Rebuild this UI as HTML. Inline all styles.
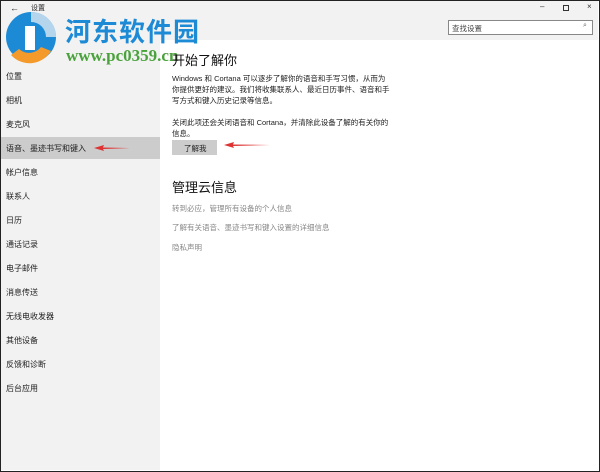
<!DOCTYPE html>
<html><head><meta charset="utf-8"><style>
*{margin:0;padding:0;box-sizing:border-box}
body{width:600px;height:472px;overflow:hidden;font-family:"Liberation Sans","Noto Sans CJK SC",sans-serif;background:#fff;position:relative}
.win{position:absolute;left:0;top:0;width:600px;height:472px;border:1px solid #222;}
.top{position:absolute;left:0;top:0;width:598px;height:40px;background:#f2f2f2}
.side{position:absolute;left:0;top:40px;width:160px;height:430px;background:#f2f2f2}
.t{position:absolute;font-size:8px;color:#222;white-space:nowrap}
.s{position:absolute;left:6px;font-size:8px;color:#222}
.sel{position:absolute;left:0;top:137px;width:160px;height:22px;background:#ccc}
.p{position:absolute;left:172px;font-size:7.5px;line-height:11px;color:#222;width:220px}
.h{position:absolute;left:172px;font-size:13px;color:#111}
.a{position:absolute;left:172px;font-size:7.5px;color:#888}
</style></head><body>
<div class="top"></div>
<div class="side"></div>
<div class="sel"></div>
<div class="win"></div>
<div class="t" style="left:10px;top:3px;font-size:9px">←</div>
<div class="t" style="left:31px;top:3px;font-size:7px">设置</div>
<div class="t" style="left:540px;top:2px;font-size:8px;color:#333">–</div>
<div style="position:absolute;left:563px;top:5px;width:6px;height:6px;border:1px solid #333"></div>
<div class="t" style="left:587px;top:2px;font-size:8px;color:#333">×</div>
<div style="position:absolute;left:448px;top:20px;width:145px;height:15px;border:1px solid #888;background:#fff"></div>
<div class="t" style="left:452px;top:23px;font-size:7.5px;color:#444">查找设置</div>
<div class="t" style="left:583px;top:22px;font-size:7px;color:#666">⌕</div>
<svg style="position:absolute;left:3px;top:10px" width="60" height="55"><circle cx="28" cy="27" r="25" fill="#1d8ad6"/><path d="M28 2a25 25 0 0 1 25 25h-10a15 15 0 0 0-15-15z" fill="#f5f5f5" opacity=".7"/><path d="M8 45a25 25 0 0 0 40-4l-10-4a15 15 0 0 1-22 2z" fill="#f39a2a"/><rect x="22" y="16" width="10" height="24" fill="#fff"/></svg>
<div class="t" style="left:65px;top:12px;font-size:26px;font-weight:bold;color:#1d8ad6;letter-spacing:1px">河东软件园</div>
<div class="t" style="left:66px;top:46px;font-size:17px;font-weight:bold;color:#4aa23c;font-family:'Liberation Serif',serif">www.pc0359.cn</div>
<div class="s" style="top:71px">位置</div>
<div class="s" style="top:95px">相机</div>
<div class="s" style="top:119px">麦克风</div>
<div class="s" style="top:143px">语音、墨迹书写和键入</div>
<svg style="position:absolute;left:92px;top:143px" width="40" height="10"><path d="M2 5L12 2L11 4.5L38 5L11 6L12 8Z" fill="#d33"/></svg>
<div class="s" style="top:167px">帐户信息</div>
<div class="s" style="top:191px">联系人</div>
<div class="s" style="top:215px">日历</div>
<div class="s" style="top:239px">通话记录</div>
<div class="s" style="top:263px">电子邮件</div>
<div class="s" style="top:287px">消息传送</div>
<div class="s" style="top:311px">无线电收发器</div>
<div class="s" style="top:335px">其他设备</div>
<div class="s" style="top:359px">反馈和诊断</div>
<div class="s" style="top:383px">后台应用</div>
<div class="h" style="top:50px">开始了解你</div>
<div class="p" style="top:73px">Windows 和 Cortana 可以逐步了解你的语音和手写习惯，从而为你提供更好的建议。我们将收集联系人、最近日历事件、语音和手写方式和键入历史记录等信息。</div>
<div class="p" style="top:117px">关闭此项还会关闭语音和 Cortana，并清除此设备了解的有关你的信息。</div>
<div style="position:absolute;left:172px;top:140px;width:45px;height:15px;background:#ccc"></div>
<div class="t" style="left:184px;top:143px;font-size:7.5px">了解我</div>
<svg style="position:absolute;left:222px;top:140px" width="50" height="10"><path d="M2 5L12 2L11 4.5L48 5L11 6L12 8Z" fill="#d33"/></svg>
<div class="h" style="top:177px">管理云信息</div>
<div class="a" style="top:203px">转到必应，管理所有设备的个人信息</div>
<div class="a" style="top:222px">了解有关语音、墨迹书写和键入设置的详细信息</div>
<div class="a" style="top:242px">隐私声明</div>
</body></html>
